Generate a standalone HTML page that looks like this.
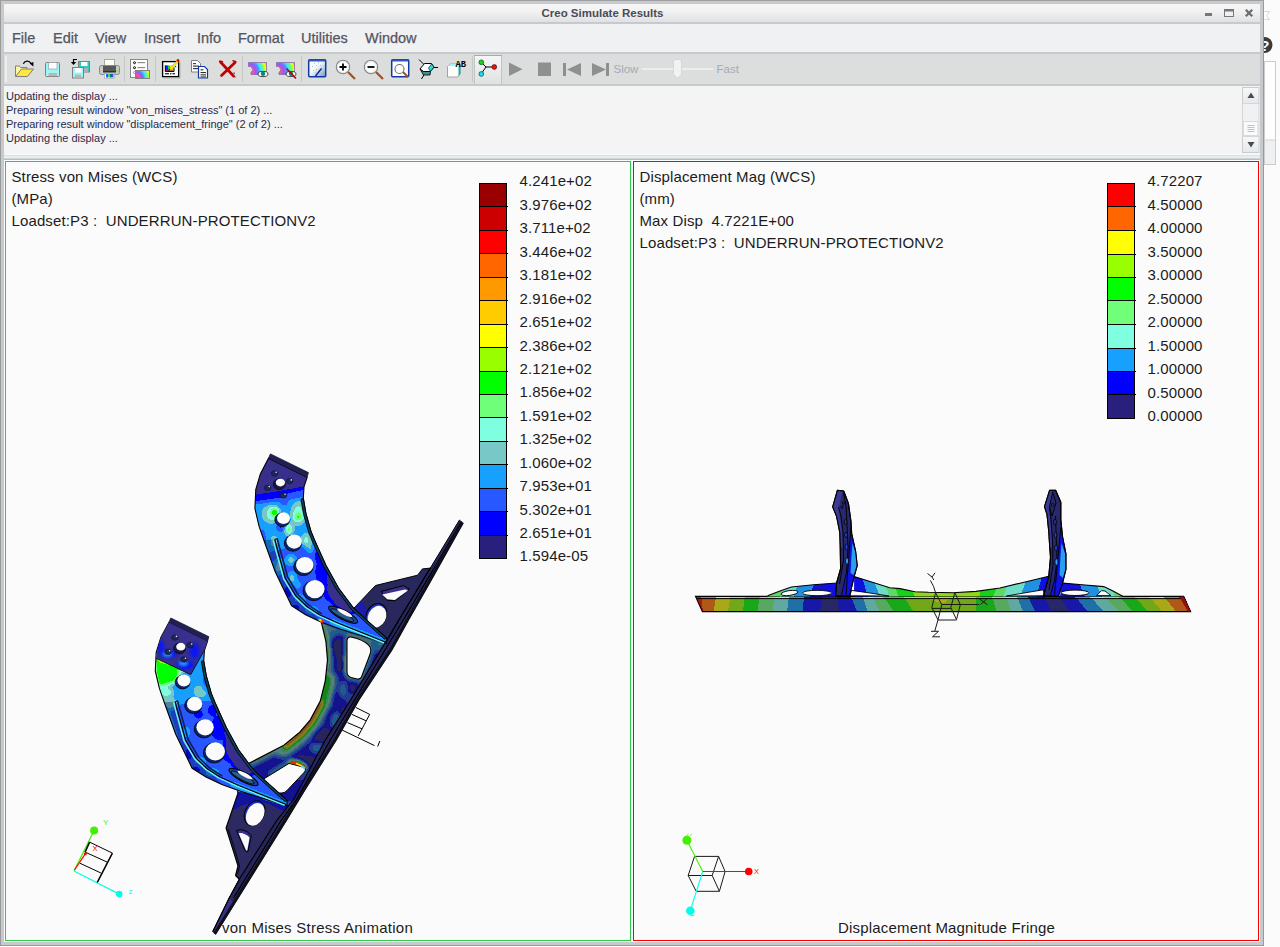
<!DOCTYPE html>
<html><head><meta charset="utf-8"><title>Creo Simulate Results</title>
<style>
*{box-sizing:border-box;margin:0;padding:0}
html,body{width:1280px;height:947px;overflow:hidden;background:#fbfbfb;font-family:"Liberation Sans",sans-serif}
.abs{position:absolute}
#win{position:absolute;left:0;top:0;width:1264px;height:946px;background:#c6cacd;border:1px solid #9a9a9a;border-top-color:#a0a0a0}
#title{position:absolute;left:4px;top:4px;width:1256px;height:18px;background:linear-gradient(#f6f6f6,#f2f2f2 40%,#dfe1e2);}
#title .t{position:absolute;left:0;width:1197px;top:3px;text-align:center;font-size:11.5px;font-weight:bold;color:#494b56;letter-spacing:0}
#menu{position:absolute;left:4px;top:24px;width:1256px;height:28px;background:#eff1f3}
#menu span{position:absolute;top:6px;font-size:14.5px;color:#55555f;white-space:nowrap;-webkit-text-stroke:0.25px #55555f}
#tb{position:absolute;left:4px;top:54px;width:1256px;height:30px;background:#dcdedd}
#msg{position:absolute;left:4px;top:86px;width:1256px;height:68px;background:#f4f4f4}
#msg div.l{position:absolute;left:2px;font-size:11px;color:#2a2a4a;white-space:nowrap}
#sep{position:absolute;left:4px;top:154px;width:1256px;height:6px;background:linear-gradient(#f4fbfd 0,#f4fbfd 1px,#dedede 1px,#dedede 2px,#ececec 2px,#ececec 4px,#d0d3d5 4.5px,#b6babc 5.6px,#b6babc 6px)}
#pl{position:absolute;left:5px;top:161px;width:626px;height:780px;background:#fbfbfb;border:1px solid #30c84a}
#pr{position:absolute;left:633px;top:161px;width:626px;height:780px;background:#fbfbfb;border:1px solid #ff0000}
#gapc{position:absolute;left:4px;top:160px;width:1256px;height:782px;background:#f8fefe}
#botw{position:absolute;left:4px;top:941px;width:1256px;height:1px;background:#f4fbfd}
.vt{position:absolute;font-size:15px;color:#111;white-space:nowrap;letter-spacing:0.35px}
.pan text{font-family:"Liberation Sans",sans-serif;white-space:pre}
.pan .vt2 text,.pan .lg text{font-size:15px;fill:#1c1c1c;letter-spacing:0.12px}
</style></head><body>
<div id="win"></div>
<div id="title"><div class="t">Creo Simulate Results</div></div>
<div id="menu">
<span style="left:8px">File</span><span style="left:49px">Edit</span><span style="left:91px">View</span><span style="left:140px">Insert</span><span style="left:193px">Info</span><span style="left:234px">Format</span><span style="left:297px">Utilities</span><span style="left:361px">Window</span>
</div>
<div id="tb"></div>
<svg id="tbs" class="abs" style="left:4px;top:54px" width="1256" height="30" viewBox="4 54 1256 30">
<defs>
<linearGradient id="rb" x1="0" y1="1" x2="1" y2="0"><stop offset="0" stop-color="#c040ff"/><stop offset=".18" stop-color="#ff50a0"/><stop offset=".32" stop-color="#8080ff"/><stop offset=".46" stop-color="#40e0ff"/><stop offset=".6" stop-color="#60ff80"/><stop offset=".75" stop-color="#ffff00"/><stop offset=".9" stop-color="#ff9000"/><stop offset="1" stop-color="#ff3000"/></linearGradient>
<radialGradient id="rr" gradientUnits="userSpaceOnUse" cx="249" cy="71" r="21"><stop offset="0" stop-color="#ff3070"/><stop offset=".2" stop-color="#ff50a0"/><stop offset=".32" stop-color="#a050ff"/><stop offset=".45" stop-color="#5090ff"/><stop offset=".56" stop-color="#40e8ff"/><stop offset=".68" stop-color="#60ff80"/><stop offset=".8" stop-color="#ffff00"/><stop offset=".92" stop-color="#ff9000"/><stop offset="1" stop-color="#ff3000"/></radialGradient><radialGradient id="rr2" gradientUnits="userSpaceOnUse" cx="136" cy="78" r="17"><stop offset="0" stop-color="#ff3070"/><stop offset=".2" stop-color="#ff50a0"/><stop offset=".32" stop-color="#a050ff"/><stop offset=".45" stop-color="#5090ff"/><stop offset=".56" stop-color="#40e8ff"/><stop offset=".68" stop-color="#60ff80"/><stop offset=".8" stop-color="#ffff00"/><stop offset=".92" stop-color="#ff9000"/><stop offset="1" stop-color="#ff3000"/></radialGradient><linearGradient id="pb" x1="0" y1="0" x2="0" y2="1"><stop offset="0" stop-color="#f6f6f6"/><stop offset="1" stop-color="#dfe1e1"/></linearGradient>
<linearGradient id="bl" x1="0" y1="0" x2="1" y2="1"><stop offset="0" stop-color="#ffffff"/><stop offset=".45" stop-color="#f4f8fc"/><stop offset="1" stop-color="#7098c0"/></linearGradient>
</defs>
<!-- handle -->
<rect x="5" y="56" width="2" height="26" fill="#eeeeee"/>
<!-- separators -->
<g fill="#c6c8c8"><rect x="124" y="56" width="1" height="26"/><rect x="155" y="56" width="1" height="26"/><rect x="242" y="56" width="1" height="26"/><rect x="301" y="56" width="1" height="26"/><rect x="472" y="56" width="1" height="26"/></g>
<!-- open folder -->
<path d="M15.500 76.500v-10.500h4l1 1.500h6.500v3h-5z" fill="#fff8a0" stroke="#808080" stroke-width="1"/>
<path d="M15.500 76.500h12l6-7.500h-12z" fill="#ffe838" stroke="#808080" stroke-width="1"/>
<path d="M23.300 63.800c1.800-3.400 5.800-3.600 7.800-0.300" fill="none" stroke="#000" stroke-width="1.300"/>
<path d="M29.600 63.600l3.800-1.600v4.600z" fill="#000"/>
<!-- save -->
<rect x="45.500" y="62.500" width="14" height="14" rx="1" fill="#9cf6f8" stroke="#808080"/>
<rect x="48.500" y="62.500" width="8.500" height="6.500" fill="#fff" stroke="#909090" stroke-width=".6"/>
<rect x="48.500" y="73" width="8.500" height="3.200" fill="#b8b8b8"/>
<!-- save copy -->
<rect x="78.500" y="61.500" width="11" height="10.500" fill="#38c8c8" stroke="#808080"/>
<rect x="81" y="62" width="6.500" height="4" fill="#fff"/><rect x="84" y="68" width="4" height="4" fill="#b0b0b0"/>
<rect x="72.500" y="67.500" width="11" height="10.500" fill="#9cf6f8" stroke="#808080"/>
<rect x="75" y="68" width="6.500" height="4.500" fill="#fff"/><rect x="75" y="74.500" width="6" height="3" fill="#b8b8b8"/>
<path d="M77 59.500h-3.500v3.500" fill="none" stroke="#000" stroke-width="1.200"/><path d="M70.800 62h5.400l-2.700 3z" fill="#000"/>
<!-- printer -->
<rect x="104.500" y="59.500" width="10" height="7" fill="#fffff4" stroke="#a8a8a0"/>
<rect x="99.500" y="65.500" width="20" height="9" rx="2" fill="#c8ccc4" stroke="#888"/>
<rect x="103" y="66" width="13" height="6" fill="#585858"/>
<rect x="103" y="71" width="13" height="1.500" fill="#303030"/>
<rect x="104.500" y="73.500" width="10" height="5" fill="#fff" stroke="#a0a0a0" stroke-width=".6"/>
<rect x="106" y="74" width="2" height="3.500" fill="#2060ff"/><rect x="108" y="74" width="2" height="3.500" fill="#40d890"/><rect x="110" y="74" width="2" height="3.500" fill="#008060"/><rect x="112" y="74" width="1.500" height="3.500" fill="#2060ff"/>
<rect x="116.500" y="70" width="2" height="2" fill="#70f060"/>
<!-- list icon -->
<rect x="130.500" y="59.500" width="17" height="18" fill="#fff" stroke="#888"/>
<g fill="none" stroke="#000" stroke-width="1"><circle cx="134.500" cy="62.700" r="1"/><circle cx="134.500" cy="67.700" r="1"/></g><circle cx="134.500" cy="72.500" r="1" fill="none" stroke="#999"/>
<rect x="137.500" y="62" width="7.500" height="1.200" fill="#909080"/><rect x="137.500" y="67" width="7.500" height="1.200" fill="#909080"/>
<rect x="135.500" y="70.500" width="14" height="8" fill="url(#rr2)" stroke="#808080"/>
<!-- edit icon -->
<rect x="162.600" y="61.600" width="16" height="15" fill="#fff" stroke="#000" stroke-width="1.300"/>
<rect x="179.300" y="63" width="1" height="15" fill="#999"/><rect x="164" y="77.300" width="16" height="1" fill="#999"/>
<rect x="165.500" y="65.500" width="8" height="5.500" fill="url(#rb)"/><rect x="165.500" y="65.500" width="2.500" height="5.500" fill="#1020ff"/><rect x="168" y="65.500" width="2" height="5.500" fill="#10d040"/><rect x="165.500" y="70" width="8" height="1" fill="#e02020" opacity=".7"/>
<path d="M165.300 65.300v6.200h8.700v-4" fill="none" stroke="#000" stroke-width="1"/>
<rect x="165" y="73.200" width="4" height="1.100" fill="#000"/><rect x="170" y="73.200" width="1.500" height="1.100" fill="#000"/><rect x="172.500" y="73.200" width="2.500" height="1.100" fill="#000"/>
<path d="M169 69.500l8-9 1.500 1.500-8 8.500z" fill="#ffee00" stroke="#a09000" stroke-width=".4"/><circle cx="178" cy="60.200" r="1.300" fill="#f00000"/><path d="M168.300 70.800l1-2 1.200 1.200z" fill="#000"/>
<rect x="175" y="66" width="1.200" height="1.200" fill="#1020ff"/>
<!-- copy -->
<path d="M191.500 60.500h6l3 3v8.500h-9z" fill="#fff" stroke="#808080"/>
<g fill="#404040"><rect x="193" y="63" width="3" height="1.200"/><rect x="193" y="65.500" width="6" height="1.200"/><rect x="193" y="68" width="5" height="1.200"/></g>
<path d="M198.500 66.500h6l3 3v8.500h-9z" fill="#fff" stroke="#1038a0" stroke-width="1.200"/>
<g fill="#303030"><rect x="200.500" y="69.300" width="3" height="1.100"/><rect x="200.500" y="72" width="5.500" height="1.100"/><rect x="200.500" y="74.300" width="5.500" height="1.100"/><rect x="200.500" y="76.400" width="5.500" height="1"/></g>
<!-- red X -->
<path d="M220.500 62 L233.500 76 M235 62.500 L221.500 75.500" stroke="#c00000" stroke-width="2.700" stroke-linecap="round" fill="none"/>
<path d="M219.500 61.200l3 .5M233 60.800l2.800 1" stroke="#c00000" stroke-width="1.500" stroke-linecap="round"/>
<rect x="233.500" y="72.500" width="1.300" height="1.300" fill="#c00000"/><rect x="234.200" y="76.300" width="1.300" height="1.300" fill="#c00000"/>
<!-- show -->
<g id="rbshape"><path d="M248.500 62.500h18v9.500h-6v2.500h-9.500v-2l2-2.500-2-3.500h-2.500z" fill="url(#rr)" stroke="#8868a8" stroke-width=".8"/>
<ellipse cx="263" cy="74" rx="5" ry="2.600" fill="#fff" stroke="#202020" stroke-width=".8"/><circle cx="263" cy="73.800" r="2.200" fill="#008888"/></g>
<use href="#rbshape" x="28" y="0"/>
<path d="M286.500 68.500l9.500 10" stroke="#b00000" stroke-width="1.600"/>
<!-- repaint -->
<rect x="308.700" y="59.700" width="17" height="17" rx="1" fill="url(#bl)" stroke="#1038a8" stroke-width="1.500"/>
<rect x="309" y="59.500" width="16.500" height="2" fill="#3058b8"/>
<path d="M315.500 76l6-7.500" stroke="#102080" stroke-width="1.300" fill="none"/>
<g fill="#a8c4e0"><rect x="312" y="66" width="1" height="1"/><rect x="314" y="63" width="1" height="1"/><rect x="316" y="65" width="1" height="1"/><rect x="318" y="62" width="1" height="1"/><rect x="313" y="70" width="1" height="1"/><rect x="316" y="69" width="1" height="1"/><rect x="320" y="65" width="1" height="1"/><rect x="315" y="72" width="1" height="1"/></g>
<!-- zoom in -->
<g id="mag"><path d="M348 72l7 7" stroke="#a05020" stroke-width="2.200"/><circle cx="343" cy="67" r="6.700" fill="#fff" stroke="#888" stroke-width="1.100"/><circle cx="343" cy="67" r="5.600" fill="none" stroke="#ddd" stroke-width=".8"/></g>
<path d="M339.500 67h7M343 63.500v7" stroke="#000" stroke-width="1.800"/>
<!-- zoom out -->
<use href="#mag" x="28" y="0"/>
<path d="M367.500 67h7" stroke="#000" stroke-width="1.800"/>
<!-- refit -->
<rect x="391.700" y="59.700" width="17" height="17" rx="1" fill="#fff" stroke="#1038a8" stroke-width="1.500"/><rect x="392" y="59.500" width="16.500" height="2" fill="#3058b8"/>
<path d="M403 72l5 5" stroke="#a05020" stroke-width="2"/><circle cx="399.500" cy="69" r="4.500" fill="#fff" stroke="#707070" stroke-width="1.100"/>
<!-- orient -->
<path d="M419 59.500l5 5M438 67.500h-4M421.500 79l3-5" stroke="#000" stroke-width="1" fill="none"/>
<path d="M420 69l4.500-5.500h7l2.500 3.500-3.500 4.500h-7z" fill="#fff" stroke="#000" stroke-width="1"/>
<path d="M430.500 71.500l3.500-4.500-2.500-3-3 4z" fill="#20e0e0" stroke="#000" stroke-width=".6"/>
<path d="M420 69l3 2.500h7.500l-0.500 3.500h-6.500z" fill="#409090" stroke="#000" stroke-width=".8"/>
<!-- AB -->
<path d="M447.500 77v-10.500l3-3h9.500v10.500l-2.500 3z" fill="#fff" stroke="#909090" stroke-width=".8"/>
<path d="M448 66l2.500-2.500h9l-1.500 2.500z" fill="#a0f4f8"/><path d="M458.500 66.500l2-2.500v9.500l-2 3z" fill="#20a8a8"/>
<text x="455.500" y="67.300" font-family="Liberation Mono,monospace" font-weight="bold" font-size="9.500" fill="#000" textLength="10.500" lengthAdjust="spacingAndGlyphs">AB</text>
<!-- pressed spin button -->
<rect x="474.500" y="55.500" width="27" height="29" fill="url(#pb)" stroke="#c2c4c4"/><rect x="474" y="55" width="28" height="1" fill="#a8aaaa"/>
<path d="M481 62l5 5h8M486 67l-5 7" stroke="#000" stroke-width="1" fill="none"/>
<circle cx="481.300" cy="62.300" r="2.400" fill="#10d818" stroke="#083008" stroke-width=".6"/><circle cx="494.300" cy="67" r="2.400" fill="#f01010" stroke="#300808" stroke-width=".6"/><circle cx="481.300" cy="74" r="2.400" fill="#10e0f0" stroke="#083038" stroke-width=".6"/>
<!-- play controls -->
<g fill="#8e908f"><path d="M509 62.500l13.500 6.700-13.500 6.800z"/><rect x="538" y="62.500" width="13" height="13.500"/><rect x="563" y="63" width="3" height="13"/><path d="M581 63v13l-14-6.500z"/><path d="M592 63v13l14-6.500z"/><rect x="606" y="63" width="3" height="13"/></g>
<text x="613.500" y="73" font-family="Liberation Sans,sans-serif" font-size="11.500" fill="#a4aab6">Slow</text>
<rect x="641.500" y="68" width="72" height="2" rx="1" fill="#eceeee"/>
<path d="M673.500 62c0-1.500 1-2.500 2.500-2.500h3c1.500 0 2.500 1 2.500 2.500v12.500l-4 3.800-4-3.800z" fill="#f2f2f2" stroke="#d2d4d4" stroke-width=".9"/>
<text x="716.500" y="73" font-family="Liberation Sans,sans-serif" font-size="11.500" fill="#a4aab6">Fast</text>
</svg>

<div id="msg">
<div class="l" style="top:4px">Updating the display ...</div>
<div class="l" style="top:18px">Preparing result window "von_mises_stress" (1 of 2) ...</div>
<div class="l" style="top:32px">Preparing result window "displacement_fringe" (2 of 2) ...</div>
<div class="l" style="top:46px">Updating the display ...</div>
</div>
<div id="sep"></div>
<div id="gapc"></div>

<div id="pl"></div>
<div id="pr"></div>




<!--EX-->
<svg class="abs" style="left:1196px;top:0" width="84" height="170" viewBox="1196 0 84 170">
<rect x="1205" y="13" width="7" height="3" fill="#76777d"/>
<rect x="1224.500" y="10.500" width="9" height="6" fill="#f0f0f0" stroke="#76777d" stroke-width="1"/><rect x="1224" y="9" width="10" height="2.500" fill="#76777d"/>
<path d="M1245.800 9.800 L1252.200 16.200 M1252.200 9.800 L1245.800 16.200" stroke="#6c6d73" stroke-width="2.300"/>
<!-- outside bits -->
<path d="M1264.500 11.500 H1269.500 L1266.500 15.500 L1269.500 19.500 H1264.500" fill="#fff" stroke="#d4d6d8" stroke-width="1"/>
<clipPath id="outc"><rect x="1264" y="0" width="16" height="170"/></clipPath>
<g clip-path="url(#outc)"><circle cx="1264.500" cy="45" r="8" fill="#3a3b3e"/>
<text x="1260.300" y="50.500" font-family="Liberation Sans,sans-serif" font-weight="bold" font-size="15" fill="#fff">?</text></g>
<rect x="1264.500" y="61.500" width="11" height="103" fill="#fdfdfd" stroke="#c9cdd0" stroke-width="1"/>
<rect x="1265" y="140" width="10" height="24" fill="#eef0f2"/><rect x="1264" y="139.500" width="11" height="1" fill="#d0d3d6"/>
<!-- window frame redraw over outside bits -->
<rect x="1260" y="0" width="3" height="170" fill="#c6cacd"/><rect x="1263" y="0" width="1" height="170" fill="#9a9a9a"/>
<rect x="1196" y="0" width="68" height="1" fill="#a0a0a0"/>
<!-- scrollbar -->
<defs><linearGradient id="sbg" x1="0" y1="0" x2="0" y2="1"><stop offset="0" stop-color="#f8f8f8"/><stop offset="1" stop-color="#e6e7e9"/></linearGradient></defs>
<rect x="1243" y="87" width="16" height="66" fill="#f0f1f2"/>
<rect x="1242.500" y="87.500" width="16.500" height="16" fill="url(#sbg)" stroke="#c9cdd0"/>
<rect x="1242.500" y="136.500" width="16.500" height="16" fill="url(#sbg)" stroke="#c9cdd0"/>
<rect x="1242.500" y="103.500" width="16.500" height="33" fill="none" stroke="#d4d7da"/>
<rect x="1243.500" y="121.500" width="14.500" height="14" fill="#fafafa" stroke="#d8dadc"/>
<path d="M1247.500 125.500h7M1247.500 127.500h7M1247.500 129.500h7M1247.500 131.500h7" stroke="#c0c2c6" stroke-width="1"/>
<path d="M1247.500 98 L1251 92.500 L1254.500 98 Z" fill="#484b58"/>
<path d="M1247.500 142 L1251 147.500 L1254.500 142 Z" fill="#484b58"/>
</svg><!--/EX-->




























<!--PL--><svg class="abs pan" style="left:6px;top:162px" width="624" height="778" viewBox="6 162 624 778">
<g class="vt2"><text x="11.500" y="182">Stress von Mises (WCS)</text><text x="11.500" y="204">(MPa)</text><text x="11.500" y="226">Loadset:P3 :&#160; UNDERRUN-PROTECTIONV2</text><text x="222" y="932.500" style="letter-spacing:0.26px">von Mises Stress Animation</text></g>
<g class="lg" shape-rendering="crispEdges"><rect x="479" y="183" width="28" height="23" fill="#990000"/>
<rect x="479" y="206" width="28" height="24" fill="#cc0000"/>
<rect x="479" y="230" width="28" height="23" fill="#ff0000"/>
<rect x="479" y="253" width="28" height="24" fill="#ff6600"/>
<rect x="479" y="277" width="28" height="23" fill="#ff9900"/>
<rect x="479" y="300" width="28" height="24" fill="#ffcc00"/>
<rect x="479" y="324" width="28" height="23" fill="#ffff00"/>
<rect x="479" y="347" width="28" height="24" fill="#99ff00"/>
<rect x="479" y="371" width="28" height="23" fill="#00ff00"/>
<rect x="479" y="394" width="28" height="23" fill="#70ff78"/>
<rect x="479" y="417" width="28" height="24" fill="#80ffe0"/>
<rect x="479" y="441" width="28" height="23" fill="#78c8c8"/>
<rect x="479" y="464" width="28" height="24" fill="#18a0ff"/>
<rect x="479" y="488" width="28" height="23" fill="#2858ff"/>
<rect x="479" y="511" width="28" height="24" fill="#0000ff"/>
<rect x="479" y="535" width="28" height="23" fill="#28207c"/>
<rect x="479.5" y="183.5" width="27" height="375" fill="none" stroke="#000" stroke-width="1"/>
<rect x="479" y="206" width="29" height="1" fill="#000"/>
<rect x="479" y="230" width="29" height="1" fill="#000"/>
<rect x="479" y="253" width="29" height="1" fill="#000"/>
<rect x="479" y="277" width="29" height="1" fill="#000"/>
<rect x="479" y="300" width="29" height="1" fill="#000"/>
<rect x="479" y="324" width="29" height="1" fill="#000"/>
<rect x="479" y="347" width="29" height="1" fill="#000"/>
<rect x="479" y="371" width="29" height="1" fill="#000"/>
<rect x="479" y="394" width="29" height="1" fill="#000"/>
<rect x="479" y="417" width="29" height="1" fill="#000"/>
<rect x="479" y="441" width="29" height="1" fill="#000"/>
<rect x="479" y="464" width="29" height="1" fill="#000"/>
<rect x="479" y="488" width="29" height="1" fill="#000"/>
<rect x="479" y="511" width="29" height="1" fill="#000"/>
<rect x="479" y="535" width="29" height="1" fill="#000"/>
<text x="519.5" y="186.4">4.241e+02</text>
<text x="519.5" y="209.8">3.976e+02</text>
<text x="519.5" y="233.3">3.711e+02</text>
<text x="519.5" y="256.7">3.446e+02</text>
<text x="519.5" y="280.2">3.181e+02</text>
<text x="519.5" y="303.6">2.916e+02</text>
<text x="519.5" y="327.0">2.651e+02</text>
<text x="519.5" y="350.5">2.386e+02</text>
<text x="519.5" y="373.9">2.121e+02</text>
<text x="519.5" y="397.4">1.856e+02</text>
<text x="519.5" y="420.8">1.591e+02</text>
<text x="519.5" y="444.2">1.325e+02</text>
<text x="519.5" y="467.7">1.060e+02</text>
<text x="519.5" y="491.1">7.953e+01</text>
<text x="519.5" y="514.6">5.302e+01</text>
<text x="519.5" y="538.0">2.651e+01</text>
<text x="519.5" y="561.4">1.594e-05</text></g>
<g shape-rendering="auto"><defs>
<defs><clipPath id="plateclip"><path d="M268.5 458.3 L307.1 477.3 L303.5 487.0 L290.3 510.5 L255.4 494.0 L257.5 484.0 L260.3 474.1 Z"/></clipPath><filter id="bl2" x="-20%" y="-20%" width="140%" height="140%"><feGaussianBlur stdDeviation="1.6"/></filter></defs>
<filter id="cmA" x="0" y="0" width="100%" height="100%" filterUnits="objectBoundingBox" color-interpolation-filters="sRGB"><feGaussianBlur stdDeviation="2.2"/><feComponentTransfer><feFuncR type="discrete" tableValues="0.220 0.000 0.157 0.094 0.471 0.502 0.439 0.000 0.600 1.000 1.000 1.000 1.000 1.000 0.800 0.600"/><feFuncG type="discrete" tableValues="0.188 0.000 0.345 0.627 0.784 1.000 1.000 1.000 1.000 1.000 0.800 0.600 0.400 0.000 0.000 0.000"/><feFuncB type="discrete" tableValues="0.549 1.000 1.000 1.000 0.784 0.878 0.471 0.000 0.000 0.000 0.000 0.000 0.000 0.000 0.000 0.000"/><feFuncA type="discrete" tableValues="1 1"/></feComponentTransfer></filter>
<filter id="cmD" x="0" y="0" width="100%" height="100%" filterUnits="objectBoundingBox" color-interpolation-filters="sRGB"><feGaussianBlur stdDeviation="2.2"/><feComponentTransfer><feFuncR type="discrete" tableValues="0.175 0.078 0.166 0.131 0.342 0.360 0.324 0.078 0.414 0.638 0.638 0.638 0.638 0.638 0.526 0.414"/><feFuncG type="discrete" tableValues="0.166 0.078 0.272 0.430 0.518 0.638 0.638 0.638 0.638 0.638 0.526 0.414 0.302 0.078 0.078 0.078"/><feFuncB type="discrete" tableValues="0.377 0.638 0.638 0.638 0.518 0.570 0.342 0.078 0.078 0.078 0.078 0.078 0.078 0.078 0.078 0.078"/><feFuncA type="discrete" tableValues="1 1"/></feComponentTransfer></filter>
<clipPath id="armclip"><path d="M268.5 458.3 L260.3 474.1 L255.8 489.3 L254.9 508.3 L259.0 526.1 L263.8 540.0 L275.2 571.7 L291.7 605.9 L305.6 614.7 L321.4 622.3 L340.0 629.0 L386.5 643.5 L386.7 638.2 L353.7 608.4 L338.5 588.1 L325.9 565.3 L314.5 540.0 L310.9 531.1 L305.9 513.4 L303.3 498.2 L304.0 486.8 L307.1 477.3 Z"/></clipPath>
<clipPath id="ringclip"><path d="M321.4 622.3 L325.9 641.3 L327.5 660.0 L325.3 680.8 L320.3 701.1 L310.1 720.1 L300.0 732.0 L283.3 745.6 L249.1 763.3 L261.8 781.0 L274.5 793.7 L286.0 807.0 L295.0 800.0 L325.3 740.0 L350.5 700.0 L398.8 620.0 L388.0 640.0 L386.5 643.5 L340.0 629.0 Z"/></clipPath>
<clipPath id="gus2clip"><path d="M237.4 791.2 L238.0 793.2 L226.1 828.0 L234.1 853.4 L238.0 866.0 L235.6 875.5 L239.6 879.5 L277.0 820.0 L292.5 801.3 L286.8 801.3 Z"/></clipPath>
</defs>
<path d="M459.6 519.8 L430.3 568.1 L398.8 620.0 L350.5 700.0 L325.3 740.0 L293.5 799.5 L277.0 820.0 L239.6 878.7 L229.3 897.7 L212.7 931.8 L215.8 934.5 L287.1 820.0 L305.3 790.0 L336.7 740.0 L359.3 700.0 L392.3 650.0 L408.9 620.0 L430.0 583.0 L463.6 523.0 Z" fill="#26265c"/>
<path d="M229.3 897.7 L212.7 931.8 L215.8 934.5 L233.5 903.0 Z" fill="#38308c"/>
<path d="M461.4 521.2 L433.3 569.4 L403.3 620.0 L354.5 700.0 L330.4 740.0 L296.4 799.5 L281.5 820.0 L233.7 897.7" fill="none" stroke="#000" stroke-width="1"/>
<path d="M459.6 519.8 L430.3 568.1 L398.8 620.0 L350.5 700.0 L325.3 740.0 L293.5 799.5 L277.0 820.0 L239.6 878.7 L229.3 897.7 L212.7 931.8" fill="none" stroke="#000" stroke-width="1"/>
<path d="M462.4 522.4 L428.8 582.4 L407.7 619.4 L391.1 649.4 L358.1 699.4 L335.5 739.4 L304.1 789.4 L285.9 819.4 L214.6 933.9" fill="none" stroke="#101018" stroke-width="3"/>
<path d="M353.7 608.4 L375.5 585.5 L417.6 575.2 L422.4 568.9 L430.3 568.1 L398.8 620.0 L388.0 640.0 Z" fill="#28285c" stroke="#000" stroke-width="1" stroke-linejoin="round"/>
<path d="M353.7 608.4 L362.0 600.0 L368.0 612.0 L372.0 628.0 L365.0 620.0 Z" fill="#1c1ca8"/>
<path d="M381.2 591.4 L403.4 585.6 L409.4 589.0 L395.4 600.8 L387.0 600.2 Z" fill="#38308c" stroke="#000" stroke-width="1" stroke-linejoin="round"/>
<path d="M382.2 594.6 L405.0 589.4 L408.0 590.4 L394.8 600.0 L387.2 599.2 Z" fill="#fbfbfb"/>
<ellipse cx="376.3" cy="615.6" rx="10" ry="12.4" transform="rotate(27 376.3 615.6)" fill="#2030c0" stroke="#000" stroke-width="1"/>
<ellipse cx="377" cy="616.8" rx="8.9" ry="11.4" transform="rotate(27 377 616.8)" fill="#fbfbfb"/>
<g clip-path="url(#ringclip)"><g filter="url(#cmD)">
<rect x="230" y="600" width="180" height="220" fill="#181818"/>
<ellipse cx="338" cy="648" rx="6" ry="10" fill="#080808"/>
<ellipse cx="334" cy="690" rx="6" ry="14" fill="#080808"/>
<ellipse cx="340" cy="665" rx="4" ry="8" fill="#080808"/>
<ellipse cx="322" cy="735" rx="10" ry="8" fill="#080808"/>
<ellipse cx="300" cy="762" rx="14" ry="7" fill="#080808"/>
<ellipse cx="352" cy="690" rx="6" ry="6" fill="#080808"/>
<ellipse cx="375" cy="640" rx="6" ry="5" fill="#080808"/>
<ellipse cx="330" cy="715" rx="5" ry="8" fill="#080808"/>
<ellipse cx="332" cy="632" rx="5" ry="6" fill="#383838"/>
<ellipse cx="343" cy="690" rx="5" ry="8" fill="#383838"/>
<ellipse cx="352" cy="700" rx="6" ry="8" fill="#282828"/>
<ellipse cx="336" cy="720" rx="6" ry="8" fill="#383838"/>
<ellipse cx="318" cy="748" rx="8" ry="5" fill="#383838"/>
<ellipse cx="300" cy="775" rx="10" ry="5" fill="#282828"/>
<ellipse cx="378" cy="648" rx="5" ry="4" fill="#383838"/>
<ellipse cx="362" cy="690" rx="5" ry="5" fill="#383838"/>
<ellipse cx="330" cy="668" rx="3" ry="8" fill="#383838"/>
<ellipse cx="345" cy="712" rx="4" ry="6" fill="#080808"/>
<ellipse cx="310" cy="760" rx="6" ry="4" fill="#080808"/>
<ellipse cx="326" cy="752" rx="5" ry="5" fill="#282828"/>
<path d="M321.4 622.3 L325.9 641.3 L327.5 660.0 L325.3 680.8" fill="none" stroke="#585858" stroke-width="9"/>
<path d="M321.4 622.3 L325.9 641.3 L327.5 660.0" fill="none" stroke="#888888" stroke-width="3"/>
<path d="M325.3 680.8 L320.3 701.1 L310.1 720.1 L300.0 732.0 L283.3 745.6" fill="none" stroke="#484848" stroke-width="24" stroke-linecap="round"/>
<path d="M325.3 680.8 L320.3 701.1 L310.1 720.1 L300.0 732.0 L283.3 745.6" fill="none" stroke="#787878" stroke-width="15" stroke-linecap="round"/>
<path d="M320.3 701.1 L310.1 720.1 L300.0 732.0 L283.3 745.6" fill="none" stroke="#c8c8c8" stroke-width="7"/>
<path d="M283.3 745.6 L249.1 763.3" fill="none" stroke="#585858" stroke-width="7"/>
<path d="M346.9 641.0 L346.9 671.9 L350.7 677.0 L360.8 678.9 L370.5 651.0 L368.0 644.5 L356.0 638.5 L349.0 636.8 Z" fill="none" stroke="#585858" stroke-width="5"/>
<path d="M346.9 655.0 L346.9 671.9 L350.7 677.0" fill="none" stroke="#888888" stroke-width="3"/>
<path d="M322.0 623.0 L340.0 631.0 L386.0 645.0" fill="none" stroke="#484848" stroke-width="5"/>
<path d="M288.0 762.0 L298.0 763.0 L306.0 768.0" fill="none" stroke="#d8d8d8" stroke-width="4"/>
<path d="M270.0 775.0 L290.0 763.0" fill="none" stroke="#484848" stroke-width="5"/>
</g></g>
<path d="M321.4 622.3 L325.9 641.3 L327.5 660.0 L325.3 680.8 L320.3 701.1 L310.1 720.1 L300.0 732.0 L283.3 745.6 L249.1 763.3 L261.8 781.0 L274.5 793.7 L286.0 807.0 L295.0 800.0 L325.3 740.0 L350.5 700.0 L398.8 620.0 L388.0 640.0 L386.5 643.5 L340.0 629.0 Z" fill="#141446" fill-opacity=".2"/>
<path d="M321.4 622.3 L325.9 641.3 L327.5 660.0 L325.3 680.8 L320.3 701.1 L310.1 720.1 L300.0 732.0 L283.3 745.6 L249.1 763.3" fill="none" stroke="#000" stroke-width="1.2"/>
<path d="M347 641 Q347 636.5 351 637 L357 638.5 Q367 642 370 647 Q371.5 650 370.5 653 L361.5 677 Q360.5 679.5 357 679 L351 677.5 Q347 676 347 672 Z" fill="#fbfbfb" stroke="#000" stroke-width="1.1"/>
<path d="M289 763.4 L303 767 Q307 768.5 304.5 772 L286.500 791 Q284.500 793 281.500 793 L276 793 Q273.500 792.500 271 790 L262 780 Z" fill="#fbfbfb" stroke="#000" stroke-width="1"/>
<path d="M290.500 762.800 Q299 763 305.500 768.500" fill="none" stroke="#ff2000" stroke-width="2"/><path d="M296 763.500 Q301 765 304.500 768" fill="none" stroke="#ffe800" stroke-width="1.600"/><path d="M301 765.800 L304.800 768.600" fill="none" stroke="#50d8ff" stroke-width="1.500"/>
<g clip-path="url(#armclip)"><g filter="url(#cmA)">
<rect x="240" y="440" width="160" height="215" fill="#383838"/>
<path d="M240 440 H400 V484 L304 488.500 L280 493 L256 496.500 L240 497 Z" fill="#080808"/>
<path d="M250 498.500 L280 495 L306 490.500 L306 495 L280 500 L252 503.500 Z" fill="#181818"/>
<path d="M268 552 L300 545 L325 545 L345 590 L390 645 L330 630 L290 610 Z" fill="#282828"/>
<ellipse cx="271" cy="514" rx="9.5" ry="9.5" fill="#484848"/>
<ellipse cx="272.3" cy="514" rx="5.7" ry="7" fill="#585858"/>
<ellipse cx="274.8" cy="512" rx="3.2" ry="3.8" fill="#888888"/>
<ellipse cx="276.1" cy="513.4" rx="1.3" ry="1.3" fill="#a8a8a8"/>
<ellipse cx="298.3" cy="513.4" rx="7.6" ry="12.7" fill="#484848"/>
<ellipse cx="298.3" cy="513.4" rx="5" ry="7.6" fill="#585858"/>
<ellipse cx="298.3" cy="517.2" rx="4.6" ry="3.6" fill="#787878"/>
<ellipse cx="284.5" cy="503" rx="4" ry="3" fill="#282828"/>
<ellipse cx="281.2" cy="527.3" rx="4.4" ry="3.8" fill="#181818"/>
<ellipse cx="288.8" cy="529" rx="4" ry="5.5" fill="#686868"/>
<ellipse cx="305.9" cy="540" rx="5.5" ry="7" fill="#484848"/>
<ellipse cx="306.5" cy="540" rx="3" ry="4.5" fill="#585858"/>
<ellipse cx="274.2" cy="541" rx="3.8" ry="6.3" fill="#484848"/>
<ellipse cx="262" cy="540" rx="4" ry="12" fill="#282828"/>
<ellipse cx="300" cy="553" rx="6" ry="5" fill="#282828"/>
<ellipse cx="291" cy="560" rx="5" ry="5" fill="#484848"/>
<ellipse cx="279" cy="566" rx="4" ry="8" fill="#484848"/>
<ellipse cx="310" cy="548" rx="3" ry="5" fill="#484848"/>
<ellipse cx="322" cy="572" rx="7" ry="12" fill="#181818"/>
<ellipse cx="330" cy="592" rx="7" ry="10" fill="#181818"/>
<ellipse cx="318" cy="556" rx="4" ry="6" fill="#181818"/>
<ellipse cx="300" cy="600" rx="6" ry="6" fill="#383838"/>
<ellipse cx="312" cy="610" rx="8" ry="4" fill="#383838"/>
<ellipse cx="288" cy="592" rx="4" ry="7" fill="#181818"/>
<ellipse cx="296" cy="607" rx="5" ry="4" fill="#181818"/>
<ellipse cx="292" cy="578" rx="4" ry="6" fill="#484848"/>
<ellipse cx="298" cy="585" rx="3" ry="5" fill="#383838"/>
<path d="M326 568 L341 589 L358 611 L348 615 L334 605 L327 592 Z" fill="#080808" />
<path d="M352 612 L386 641 L362 632 L345 622 Z" fill="#282828"/>
<path d="M330 621 L386 643" stroke="#484848" stroke-width="3"/>
</g></g>
<path d="M263.8 540.0 L275.2 571.7 L291.7 605.9 L305.6 614.7 L321.4 622.3 L306.9 606.5 L296.0 596.0 L285.3 578.0 L276.5 546.0 L274.8 539.4 Z" fill="#0a1450" fill-opacity=".38"/>
<path d="M268.5 458.3 L260.3 474.1 L255.8 489.3 L254.9 508.3 L259.0 526.1 L263.8 540.0 L275.2 571.7 L291.7 605.9 L305.6 614.7 L321.4 622.3 L340.0 629.0 L386.5 643.5 L386.7 638.2 L353.7 608.4 L338.5 588.1 L325.9 565.3 L314.5 540.0 L310.9 531.1 L305.9 513.4 L303.3 498.2 L304.0 486.8 L307.1 477.3 Z" fill="none" stroke="#000" stroke-width="1.1" stroke-linejoin="round"/>
<path d="M303.3 498.2 L305.9 513.4 L310.9 531.1 L314.5 540.0 L325.9 565.3 L338.5 588.1 L353.7 608.4 L386.7 638.2 L384.4 639.2 L351.4 609.4 L336.2 589.1 L323.6 566.3 L312.2 541.0 L308.6 532.1 L303.6 514.4 L301.0 499.2 Z" fill="#10405c" stroke="#000" stroke-width=".9"/>
<path d="M273.2 540.0 L274.9 546.6 L283.7 578.6 L294.4 596.6 L305.3 607.1 L317.9 615.3 L336.9 623.9 L384.4 642.9" fill="none" stroke="#70f0f0" stroke-width="1.6"/>
<path d="M274.8 539.4 L276.5 546.0 L285.3 578.0 L296.0 596.0 L306.9 606.5 L319.5 614.7 L338.5 623.3 L386.0 642.3" fill="none" stroke="#000" stroke-width="1.1"/>
<path d="M277.2 538.6 L278.9 545.2 L287.7 577.2 L298.4 595.2 L309.3 605.7 L321.9 613.9" fill="none" stroke="#102050" stroke-width="1.6"/>
<path d="M274.8 539.4 L277.2 538.6" stroke="#000" stroke-width="1"/>
<path d="M270.4 453.9 L308.4 472.6 L307.1 477.3 L268.5 458.3 Z" fill="#202054" stroke="#101030" stroke-width=".8"/>
<ellipse cx="282.20000000000005" cy="519.8" rx="7.3999999999999995" ry="6.8" fill="#0c2468" stroke="#000" stroke-width=".8"/>
<ellipse cx="283.5" cy="518.2" rx="6.5" ry="5.8999999999999995" fill="#fbfbfb"/>
<ellipse cx="292.90000000000003" cy="543.1999999999999" rx="8.6" ry="8" fill="#0c2468" stroke="#000" stroke-width=".8"/>
<ellipse cx="294.2" cy="541.6" rx="7.7" ry="7.1" fill="#fbfbfb"/>
<ellipse cx="303.40000000000003" cy="566.5999999999999" rx="9.6" ry="9" fill="#0c2468" stroke="#000" stroke-width=".8"/>
<ellipse cx="304.7" cy="565.0" rx="8.7" ry="8.1" fill="#fbfbfb"/>
<ellipse cx="313.6" cy="590.6999999999999" rx="10.6" ry="10" fill="#0c2468" stroke="#000" stroke-width=".8"/>
<ellipse cx="314.9" cy="589.1" rx="9.7" ry="9.1" fill="#fbfbfb"/>
<g transform="rotate(28 343.1 614.7)"><ellipse cx="343.1" cy="614.7" rx="16.3" ry="4.6" fill="#1c4488" stroke="#000" stroke-width="1"/><ellipse cx="342.6" cy="615.5" rx="13" ry="2.6" fill="#2c5c8c" stroke="#000" stroke-width=".7"/><ellipse cx="343.6" cy="612.2" rx="8.4" ry="1.9" fill="#fbfbfb"/></g>
<ellipse cx="279.3" cy="484.2" rx="6" ry="5.5" fill="#181840" stroke="#000" stroke-width=".6"/>
<ellipse cx="280.4" cy="482.6" rx="4.6" ry="3.9" fill="#fbfbfb"/>
<ellipse cx="274.5" cy="473.5" rx="3.3" ry="2.7" fill="#1c2858" stroke="#101030" stroke-width=".6"/>
<circle cx="276.1" cy="472.3" r=".8" fill="#e8e8f0"/>
<ellipse cx="289.7" cy="481.1" rx="3.3" ry="2.7" fill="#1c2858" stroke="#101030" stroke-width=".6"/>
<circle cx="291.3" cy="479.90000000000003" r=".8" fill="#e8e8f0"/>
<ellipse cx="267.6" cy="487.8" rx="3.3" ry="2.7" fill="#1c2858" stroke="#101030" stroke-width=".6"/>
<circle cx="269.20000000000005" cy="486.6" r=".8" fill="#e8e8f0"/>
<ellipse cx="283.5" cy="495.4" rx="3.3" ry="2.7" fill="#1c2858" stroke="#101030" stroke-width=".6"/>
<circle cx="285.1" cy="494.2" r=".8" fill="#e8e8f0"/>
<circle cx="321.8" cy="621.2" r="1.7" fill="#ff3000"/><circle cx="320.300" cy="620.200" r="1.200" fill="#ffe000"/><circle cx="319" cy="619.500" r="1" fill="#40e040"/>
<g clip-path="url(#gus2clip)"><g filter="url(#cmD)">
<rect x="215" y="780" width="90" height="110" fill="#080808"/>
<path d="M230 785 L295 800 L285 812 L262 800 L240 806 L232 812 Z" fill="#181818"/>
<path d="M262 797 L292 803" stroke="#484848" stroke-width="3"/>
</g></g>
<path d="M237.4 791.2 L238.0 793.2 L226.1 828.0 L234.1 853.4 L238.0 866.0 L235.6 875.5 L239.6 879.5" fill="none" stroke="#000" stroke-width="1.2" stroke-linejoin="round"/>
<path d="M228.3 829.0 L236.0 853.5 L239.6 866.0 L237.5 874.0" fill="none" stroke="#000" stroke-width=".8"/>
<ellipse cx="254.6" cy="813.2" rx="9.6" ry="13" transform="rotate(27 254.6 813.2)" fill="#2030c0" stroke="#000" stroke-width="1"/>
<ellipse cx="255.2" cy="814.4" rx="8.5" ry="12" transform="rotate(27 255.2 814.4)" fill="#fbfbfb"/>
<path d="M236.500 830.500 Q244 827.500 251.300 835.500 L248 851.500 Q246.500 853 245 850.500 Z" fill="#38308c" stroke="#000" stroke-width="1" stroke-linejoin="round"/>
<path d="M238.600 833.200 Q244 832.200 249.600 837.600 L247.300 850.200 Q246.500 851 245.700 849.600 Z" fill="#fbfbfb"/>
<g transform="translate(-99.6 162.3)"><defs><clipPath id="armclip2"><path d="M268.5 460.1 L260.3 475.5 L255.8 490.2 L254.9 508.7 L259.0 526.1 L263.8 540.0 L275.2 571.7 L291.7 605.9 L305.6 614.7 L321.4 622.3 L340.0 629.0 L386.5 643.5 L386.7 638.2 L353.7 608.4 L338.5 588.1 L325.9 565.3 L314.5 540.0 L310.9 531.1 L305.9 513.8 L303.3 499.1 L304.0 488.2 L307.1 479.1 Z"/></clipPath></defs>
<g clip-path="url(#armclip2)"><g filter="url(#cmA)">
<rect x="240" y="440" width="160" height="215" fill="#383838"/>
<path d="M268 545 L300 538 L322 540 L345 590 L390 645 L330 630 L290 610 Z" fill="#282828"/>
<path d="M254 494 L280 509 L277 519 L267 523 L257 525 L254 508 Z" fill="#787878"/>
<path d="M255 494 L284 507" stroke="#a8a8a8" stroke-width="3"/>
<ellipse cx="265" cy="530" rx="8" ry="5" fill="#585858"/>
<ellipse cx="270" cy="541" rx="7" ry="6" fill="#484848"/>
<ellipse cx="280" cy="522" rx="3" ry="4" fill="#484848"/>
<ellipse cx="300" cy="528" rx="7" ry="8" fill="#484848"/>
<ellipse cx="297" cy="520" rx="4" ry="4" fill="#383838"/>
<ellipse cx="305" cy="520" rx="3" ry="8" fill="#282828"/>
<ellipse cx="263" cy="552" rx="3" ry="8" fill="#282828"/>
<ellipse cx="318" cy="566" rx="8" ry="12" fill="#181818"/>
<ellipse cx="328" cy="590" rx="8" ry="10" fill="#181818"/>
<ellipse cx="312" cy="548" rx="5" ry="6" fill="#181818"/>
<ellipse cx="298" cy="552" rx="5" ry="5" fill="#181818"/>
<ellipse cx="300" cy="600" rx="6" ry="6" fill="#383838"/>
<ellipse cx="312" cy="610" rx="8" ry="4" fill="#383838"/>
<ellipse cx="288" cy="592" rx="4" ry="7" fill="#181818"/>
<ellipse cx="296" cy="607" rx="5" ry="4" fill="#181818"/>
<ellipse cx="286" cy="570" rx="4" ry="6" fill="#383838"/>
<ellipse cx="306" cy="580" rx="3" ry="4" fill="#282828"/>
<path d="M322 560 L340 590 L356 610 L349 614 L334 606 L326 590 Z" fill="#080808" />
<path d="M352 612 L386 641 L362 632 L345 622 Z" fill="#282828"/>
<path d="M330 621 L386 643" stroke="#484848" stroke-width="3"/>
</g></g>
<path d="M263.8 540.0 L275.2 571.7 L291.7 605.9 L305.6 614.7 L321.4 622.3 L306.9 606.5 L296.0 596.0 L285.3 578.0 L276.5 546.0 L274.8 539.4 Z" fill="#0a1450" fill-opacity=".38"/>
<path d="M268.5 460.1 L260.3 475.5 L255.8 490.2 L254.9 508.7 L259.0 526.1 L263.8 540.0 L275.2 571.7 L291.7 605.9 L305.6 614.7 L321.4 622.3 L340.0 629.0 L386.5 643.5 L386.7 638.2 L353.7 608.4 L338.5 588.1 L325.9 565.3 L314.5 540.0 L310.9 531.1 L305.9 513.8 L303.3 499.1 L304.0 488.2 L307.1 479.1 Z" fill="none" stroke="#000" stroke-width="1.1" stroke-linejoin="round"/>
<path d="M303.3 498.2 L305.9 513.4 L310.9 531.1 L314.5 540.0 L325.9 565.3 L338.5 588.1 L353.7 608.4 L386.7 638.2 L384.4 639.2 L351.4 609.4 L336.2 589.1 L323.6 566.3 L312.2 541.0 L308.6 532.1 L303.6 514.4 L301.0 499.2 Z" fill="#10405c" stroke="#000" stroke-width=".9"/>
<path d="M273.2 540.0 L274.9 546.6 L283.7 578.6 L294.4 596.6 L305.3 607.1 L317.9 615.3 L336.9 623.9 L384.4 642.9" fill="none" stroke="#70f0f0" stroke-width="1.6"/>
<path d="M274.8 539.4 L276.5 546.0 L285.3 578.0 L296.0 596.0 L306.9 606.5 L319.5 614.7 L338.5 623.3 L386.0 642.3" fill="none" stroke="#000" stroke-width="1.1"/>
<path d="M277.2 538.6 L278.9 545.2 L287.7 577.2 L298.4 595.2 L309.3 605.7 L321.9 613.9" fill="none" stroke="#102050" stroke-width="1.6"/>
<path d="M274.8 539.4 L277.2 538.6" stroke="#000" stroke-width="1"/>
<path d="M270.4 455.7 L308.4 474.4 L307.1 479.1 L268.5 460.1 Z" fill="#202054" stroke="#101030" stroke-width=".8"/>
<ellipse cx="282.20000000000005" cy="519.8" rx="7.3999999999999995" ry="6.8" fill="#0c2468" stroke="#000" stroke-width=".8"/>
<ellipse cx="283.5" cy="518.2" rx="6.5" ry="5.8999999999999995" fill="#fbfbfb"/>
<ellipse cx="292.90000000000003" cy="543.1999999999999" rx="8.6" ry="8" fill="#0c2468" stroke="#000" stroke-width=".8"/>
<ellipse cx="294.2" cy="541.6" rx="7.7" ry="7.1" fill="#fbfbfb"/>
<ellipse cx="303.40000000000003" cy="566.5999999999999" rx="9.6" ry="9" fill="#0c2468" stroke="#000" stroke-width=".8"/>
<ellipse cx="304.7" cy="565.0" rx="8.7" ry="8.1" fill="#fbfbfb"/>
<ellipse cx="313.6" cy="590.6999999999999" rx="10.6" ry="10" fill="#0c2468" stroke="#000" stroke-width=".8"/>
<ellipse cx="314.9" cy="589.1" rx="9.7" ry="9.1" fill="#fbfbfb"/>
<g transform="rotate(28 343.1 614.7)"><ellipse cx="343.1" cy="614.7" rx="16.3" ry="4.6" fill="#1c4488" stroke="#000" stroke-width="1"/><ellipse cx="342.6" cy="615.5" rx="13" ry="2.6" fill="#2c5c8c" stroke="#000" stroke-width=".7"/><ellipse cx="343.6" cy="612.2" rx="8.4" ry="1.9" fill="#fbfbfb"/></g>
<g transform="translate(0 1.8)"><path d="M268.5 458.3 L307.1 477.3 L303.5 487.0 L290.3 510.5 L255.4 494.0 L257.5 484.0 L260.3 474.1 Z" fill="#38308c"/><g clip-path="url(#plateclip)"><g filter="url(#bl2)"><ellipse cx="268" cy="490" rx="9" ry="4" fill="#0818f0"/><ellipse cx="285" cy="501" rx="9" ry="5" fill="#0818f0"/><ellipse cx="294" cy="487" rx="5" ry="8" fill="#0818f0"/><ellipse cx="260" cy="482" rx="4" ry="6" fill="#0818f0"/><ellipse cx="267" cy="490" rx="4" ry="2" fill="#30a0ff"/><ellipse cx="283" cy="499" rx="4" ry="2" fill="#30a0ff"/></g></g><path d="M255.4 494.0 L290.3 510.5 L303.5 487.0" fill="none" stroke="#101030" stroke-width="1"/><ellipse cx="279.3" cy="484.2" rx="6" ry="5.5" fill="#181840" stroke="#000" stroke-width=".6"/>
<ellipse cx="280.4" cy="482.6" rx="4.6" ry="3.9" fill="#fbfbfb"/>
<ellipse cx="274.5" cy="473.5" rx="3.3" ry="2.7" fill="#1c2858" stroke="#101030" stroke-width=".6"/>
<circle cx="276.1" cy="472.3" r=".8" fill="#e8e8f0"/>
<ellipse cx="289.7" cy="481.1" rx="3.3" ry="2.7" fill="#1c2858" stroke="#101030" stroke-width=".6"/>
<circle cx="291.3" cy="479.90000000000003" r=".8" fill="#e8e8f0"/>
<ellipse cx="267.6" cy="487.8" rx="3.3" ry="2.7" fill="#1c2858" stroke="#101030" stroke-width=".6"/>
<circle cx="269.20000000000005" cy="486.6" r=".8" fill="#e8e8f0"/>
<ellipse cx="283.5" cy="495.4" rx="3.3" ry="2.7" fill="#1c2858" stroke="#101030" stroke-width=".6"/>
<circle cx="285.1" cy="494.2" r=".8" fill="#e8e8f0"/></g></g>
<path d="M430.3 568.1 L398.8 620.0 L350.5 700.0 L325.3 740.0 L293.5 799.5 L277.0 820.0 L239.6 878.7 L229.3 897.7 L212.7 931.8" fill="none" stroke="#000" stroke-width="1.1"/>
<path d="M433.3 569.4 L403.3 620.0 L354.5 700.0 L330.4 740.0 L296.4 799.5 L281.5 820.0 L233.7 897.7" fill="none" stroke="#000" stroke-width="1"/>
<g stroke="#000" stroke-width="1" fill="none"><path d="M355.700 707.400L369.700 714.400M351.900 714.400L365.900 720.700M347.500 722.600L362.100 728.900M342 730L374.500 745.600M369.700 714.400L358.300 735.900M377.700 746.500L379.800 741"/></g></g>
<g fill="none">
<path d="M74 871 L94.100 830.600" stroke="#40f000" stroke-width="1.2"/><circle cx="94.100" cy="830.600" r="4" fill="#44f000"/>
<path d="M74 871 L119.200 894.100" stroke="#00ffe8" stroke-width="1.2"/><circle cx="119.200" cy="894.100" r="3.300" fill="#00ffe8"/>
<g stroke="#000" stroke-width="1"><path d="M89.600 842.100 L112.400 853.100 M85.100 852.100 L107 862 M79.900 863.200 L100.900 873"/><path d="M112.400 853.100 L97.300 882.400 M89.600 842.100 L85.100 852.100" stroke-width="1.500"/></g>
<path d="M74.500 870 L85.100 854.100" stroke="#ff0000" stroke-width="1.200"/><circle cx="85.300" cy="853.800" r="1.500" fill="#ff0000"/>
</g>
<text x="103" y="824.500" font-size="8" fill="#40f000">Y</text><text x="92.500" y="851" font-size="7.500" fill="#ff0000">X</text><text x="128.500" y="893.500" font-size="8" fill="#00ffe8">z</text>
</svg><!--/PL-->
<!--PR--><svg class="abs pan" style="left:634px;top:162px" width="624" height="778" viewBox="634 162 624 778">
<g class="vt2"><text x="639.500" y="182">Displacement Mag (WCS)</text><text x="639.500" y="204">(mm)</text><text x="639.500" y="226">Max Disp&#160; 4.7221E+00</text><text x="639.500" y="248">Loadset:P3 :&#160; UNDERRUN-PROTECTIONV2</text><text x="838" y="932.500" style="letter-spacing:0.18px">Displacement Magnitude Fringe</text></g>
<g class="lg" shape-rendering="crispEdges"><rect x="1107" y="183" width="28" height="23" fill="#ff0000"/>
<rect x="1107" y="206" width="28" height="24" fill="#ff6600"/>
<rect x="1107" y="230" width="28" height="24" fill="#ffff00"/>
<rect x="1107" y="254" width="28" height="23" fill="#99ff00"/>
<rect x="1107" y="277" width="28" height="23" fill="#00ff00"/>
<rect x="1107" y="300" width="28" height="24" fill="#70ff78"/>
<rect x="1107" y="324" width="28" height="24" fill="#80ffe0"/>
<rect x="1107" y="348" width="28" height="23" fill="#18a0ff"/>
<rect x="1107" y="371" width="28" height="23" fill="#0000ff"/>
<rect x="1107" y="394" width="28" height="24" fill="#28207c"/>
<rect x="1107.5" y="183.5" width="27" height="235" fill="none" stroke="#000" stroke-width="1"/>
<rect x="1107" y="206" width="29" height="1" fill="#000"/>
<rect x="1107" y="230" width="29" height="1" fill="#000"/>
<rect x="1107" y="254" width="29" height="1" fill="#000"/>
<rect x="1107" y="277" width="29" height="1" fill="#000"/>
<rect x="1107" y="300" width="29" height="1" fill="#000"/>
<rect x="1107" y="324" width="29" height="1" fill="#000"/>
<rect x="1107" y="348" width="29" height="1" fill="#000"/>
<rect x="1107" y="371" width="29" height="1" fill="#000"/>
<rect x="1107" y="394" width="29" height="1" fill="#000"/>
<text x="1147.5" y="186.4">4.72207</text>
<text x="1147.5" y="209.9">4.50000</text>
<text x="1147.5" y="233.4">4.00000</text>
<text x="1147.5" y="256.9">3.50000</text>
<text x="1147.5" y="280.4">3.00000</text>
<text x="1147.5" y="303.9">2.50000</text>
<text x="1147.5" y="327.4">2.00000</text>
<text x="1147.5" y="350.9">1.50000</text>
<text x="1147.5" y="374.4">1.00000</text>
<text x="1147.5" y="397.9">0.50000</text>
<text x="1147.5" y="421.4">0.00000</text></g>
<g shape-rendering="crispEdges">
<path d="M695.5 596.4 L701.9 596.4 L703.4 611.6 L702.4 611.6 Z" fill="#b01818"/>
<path d="M701.4 596.4 L716.6 596.4 L714.2 611.6 L702.9 611.6 Z" fill="#b05818"/>
<path d="M716.1 596.4 L730.9 596.4 L728.5 611.6 L713.7 611.6 Z" fill="#a8a818"/>
<path d="M730.4 596.4 L745.2 596.4 L743.5 611.6 L728.0 611.6 Z" fill="#70a818"/>
<path d="M744.7 596.4 L760.2 596.4 L757.8 611.6 L743.0 611.6 Z" fill="#18a818"/>
<path d="M759.7 596.4 L775.3 596.4 L772.9 611.6 L757.3 611.6 Z" fill="#58a860"/>
<path d="M774.8 596.4 L789.5 596.4 L787.5 611.6 L772.4 611.6 Z" fill="#60a8a0"/>
<path d="M789.0 596.4 L804.6 596.4 L803.0 611.6 L787.0 611.6 Z" fill="#2070a8"/>
<path d="M804.1 596.4 L822.8 596.4 L820.5 611.6 L802.5 611.6 Z" fill="#1818a8"/>
<path d="M822.3 596.4 L837.5 596.4 L840.0 611.6 L820.0 611.6 Z" fill="#282868"/>
<path d="M837.0 596.4 L851.4 596.4 L857.7 611.6 L839.5 611.6 Z" fill="#1818a8"/>
<path d="M850.9 596.4 L863.3 596.4 L868.0 611.6 L857.2 611.6 Z" fill="#2070a8"/>
<path d="M862.8 596.4 L873.6 596.4 L879.9 611.6 L867.5 611.6 Z" fill="#60a8a0"/>
<path d="M873.1 596.4 L883.9 596.4 L894.2 611.6 L879.4 611.6 Z" fill="#58a860"/>
<path d="M883.4 596.4 L904.3 596.4 L913.8 611.6 L893.7 611.6 Z" fill="#18a818"/>
<path d="M903.8 596.4 L976.5 596.4 L976.5 611.6 L913.3 611.6 Z" fill="#70a818"/>
<path d="M976.0 596.4 L992.5 596.4 L997.0 611.6 L976.0 611.6 Z" fill="#18a818"/>
<path d="M992.0 596.4 L1006.3 596.4 L1011.4 611.6 L996.5 611.6 Z" fill="#58a860"/>
<path d="M1005.8 596.4 L1017.5 596.4 L1023.5 611.6 L1010.9 611.6 Z" fill="#60a8a0"/>
<path d="M1017.0 596.4 L1028.6 596.4 L1035.5 611.6 L1023.0 611.6 Z" fill="#2070a8"/>
<path d="M1028.1 596.4 L1045.0 596.4 L1051.8 611.6 L1035.0 611.6 Z" fill="#1818a8"/>
<path d="M1044.5 596.4 L1059.6 596.4 L1069.9 611.6 L1051.3 611.6 Z" fill="#282868"/>
<path d="M1059.1 596.4 L1075.9 596.4 L1087.9 611.6 L1069.4 611.6 Z" fill="#1818a8"/>
<path d="M1075.4 596.4 L1090.5 596.4 L1104.3 611.6 L1087.4 611.6 Z" fill="#2070a8"/>
<path d="M1090.0 596.4 L1104.3 596.4 L1119.7 611.6 L1103.8 611.6 Z" fill="#60a8a0"/>
<path d="M1103.8 596.4 L1119.7 596.4 L1133.5 611.6 L1119.2 611.6 Z" fill="#58a860"/>
<path d="M1119.2 596.4 L1135.2 596.4 L1148.1 611.6 L1133.0 611.6 Z" fill="#18a818"/>
<path d="M1134.7 596.4 L1149.8 596.4 L1162.7 611.6 L1147.6 611.6 Z" fill="#70a818"/>
<path d="M1149.3 596.4 L1164.4 596.4 L1176.5 611.6 L1162.2 611.6 Z" fill="#a8a818"/>
<path d="M1163.9 596.4 L1179.9 596.4 L1188.5 611.6 L1176.0 611.6 Z" fill="#b05818"/>
<path d="M1179.4 596.4 L1184.2 596.4 L1191.1 611.6 L1188.0 611.6 Z" fill="#b01818"/>
<path d="M927.0 598.5 L950.0 598.5 L944.0 603.0 L938.0 602.0 Z" fill="#b0a820"/>
<rect x="695.5" y="596" width="6.4" height="2" fill="#ff0000"/>
<rect x="701.4" y="596" width="15.2" height="2" fill="#ff6600"/>
<rect x="716.1" y="596" width="14.8" height="2" fill="#ffff00"/>
<rect x="730.4" y="596" width="14.8" height="2" fill="#99ff00"/>
<rect x="744.7" y="596" width="15.5" height="2" fill="#00ff00"/>
<rect x="759.7" y="596" width="15.6" height="2" fill="#70ff78"/>
<rect x="774.8" y="596" width="14.7" height="2" fill="#80ffe0"/>
<rect x="789.0" y="596" width="15.6" height="2" fill="#18a0ff"/>
<rect x="804.1" y="596" width="18.7" height="2" fill="#0000ff"/>
<rect x="822.3" y="596" width="15.2" height="2" fill="#28207c"/>
<rect x="837.0" y="596" width="14.4" height="2" fill="#0000ff"/>
<rect x="850.9" y="596" width="12.4" height="2" fill="#18a0ff"/>
<rect x="862.8" y="596" width="10.8" height="2" fill="#80ffe0"/>
<rect x="873.1" y="596" width="10.8" height="2" fill="#70ff78"/>
<rect x="883.4" y="596" width="20.9" height="2" fill="#00ff00"/>
<rect x="903.8" y="596" width="72.7" height="2" fill="#99ff00"/>
<rect x="976.0" y="596" width="16.5" height="2" fill="#00ff00"/>
<rect x="992.0" y="596" width="14.3" height="2" fill="#70ff78"/>
<rect x="1005.8" y="596" width="11.7" height="2" fill="#80ffe0"/>
<rect x="1017.0" y="596" width="11.6" height="2" fill="#18a0ff"/>
<rect x="1028.1" y="596" width="16.9" height="2" fill="#0000ff"/>
<rect x="1044.5" y="596" width="15.1" height="2" fill="#28207c"/>
<rect x="1059.1" y="596" width="16.8" height="2" fill="#0000ff"/>
<rect x="1075.4" y="596" width="15.1" height="2" fill="#18a0ff"/>
<rect x="1090.0" y="596" width="14.3" height="2" fill="#80ffe0"/>
<rect x="1103.8" y="596" width="15.9" height="2" fill="#70ff78"/>
<rect x="1119.2" y="596" width="16.0" height="2" fill="#00ff00"/>
<rect x="1134.7" y="596" width="15.1" height="2" fill="#99ff00"/>
<rect x="1149.3" y="596" width="15.1" height="2" fill="#ffff00"/>
<rect x="1163.9" y="596" width="16.0" height="2" fill="#ff6600"/>
<rect x="1179.4" y="596" width="4.8" height="2" fill="#ff0000"/>
</g>
<path d="M695.5 596.4 L1183.7 596.4 L1190.6 611.6 L702.4 611.6 Z" fill="none" stroke="#000" stroke-width="1.1"/>
<path d="M697 598.6H1185" stroke="#000" stroke-width="1"/>
<path d="M1179.4 597.0 L1183.7 596.4 L1190.6 611.6 L1188.0 611.6 Z" fill="#901010"/>
<defs><clipPath id="memclip"><path d="M854.1 576.6 L870.0 581.5 L889.7 587.7 L900.0 588.6 L915.0 591.7 L928.5 592.3 L953.2 592.8 L976.0 591.4 L1000.0 588.0 L1020.0 583.2 L1048.8 576.3 L1048.8 596.4 L854.1 596.4 Z"/></clipPath></defs>
<g clip-path="url(#memclip)" shape-rendering="crispEdges">
<path d="M845.0 570.0 L860.5 570.0 L868.5 597.0 L850.0 597.0 Z" fill="#1010e0"/>
<path d="M860.0 570.0 L870.5 570.0 L880.5 597.0 L868.0 597.0 Z" fill="#2090e0"/>
<path d="M870.0 570.0 L878.5 570.0 L890.5 597.0 L880.0 597.0 Z" fill="#70dcc8"/>
<path d="M878.0 570.0 L887.5 570.0 L899.5 597.0 L890.0 597.0 Z" fill="#60d868"/>
<path d="M887.0 570.0 L905.5 570.0 L915.5 597.0 L899.0 597.0 Z" fill="#18d018"/>
<path d="M905.0 570.0 L985.5 570.0 L979.5 597.0 L915.0 597.0 Z" fill="#90d818"/>
<path d="M985.0 570.0 L1004.5 570.0 L993.5 597.0 L979.0 597.0 Z" fill="#18d018"/>
<path d="M1004.0 570.0 L1014.5 570.0 L1003.5 597.0 L993.0 597.0 Z" fill="#60d868"/>
<path d="M1014.0 570.0 L1030.5 570.0 L1020.5 597.0 L1003.0 597.0 Z" fill="#70dcc8"/>
<path d="M1030.0 570.0 L1044.5 570.0 L1036.5 597.0 L1020.0 597.0 Z" fill="#2090e0"/>
<path d="M1044.0 570.0 L1060.5 570.0 L1056.5 597.0 L1036.0 597.0 Z" fill="#1010e0"/>
</g>
<path d="M854.1 576.6 L870.0 581.5 L889.7 587.7 L900.0 588.6 L915.0 591.7 L928.5 592.3 L953.2 592.8 L976.0 591.4 L1000.0 588.0 L1020.0 583.2 L1048.8 576.3" fill="none" stroke="#000" stroke-width="1.1"/>
<path d="M849.8 595.8 L851.5 590.4 L870.0 593.0 L889.0 596.0 Z" fill="#fbfbfb" stroke="#000" stroke-width=".9"/>
<path d="M1006.5 596.0 L1025.0 592.8 L1043.2 589.8 L1044.8 595.8 Z" fill="#fbfbfb" stroke="#000" stroke-width=".9"/>
<defs><clipPath id="lfclip"><path d="M767.6 595.8 L780.0 591.0 L791.4 587.0 L813.6 584.8 L837.0 583.0 L837.0 596.4 L767.6 596.4 Z"/></clipPath><clipPath id="rfclip"><path d="M1062.0 583.1 L1085.0 585.0 L1103.8 586.6 L1113.0 591.0 L1122.7 596.4 L1060.0 596.4 Z"/></clipPath></defs>
<g clip-path="url(#lfclip)" shape-rendering="crispEdges">
<path d="M764.0 580.0 L787.5 580.0 L780.5 597.0 L757.0 597.0 Z" fill="#60d868"/>
<path d="M787.0 580.0 L800.5 580.0 L793.5 597.0 L780.0 597.0 Z" fill="#70dcc8"/>
<path d="M800.0 580.0 L816.5 580.0 L809.5 597.0 L793.0 597.0 Z" fill="#2090e0"/>
<path d="M816.0 580.0 L844.5 580.0 L837.5 597.0 L809.0 597.0 Z" fill="#1010e0"/>
</g>
<path d="M767.6 595.8 L780.0 591.0 L791.4 587.0 L813.6 584.8 L837.0 583.0" fill="none" stroke="#000" stroke-width="1.1"/>
<ellipse cx="789.5" cy="593" rx="8.5" ry="2.4" transform="rotate(-8 789.5 593)" fill="#fbfbfb" stroke="#000" stroke-width=".9"/>
<ellipse cx="817" cy="593" rx="14.5" ry="2.7" fill="#fbfbfb" stroke="#000" stroke-width=".9"/>
<g clip-path="url(#rfclip)" shape-rendering="crispEdges">
<path d="M1051.0 580.0 L1078.5 580.0 L1085.5 597.0 L1058.0 597.0 Z" fill="#1010e0"/>
<path d="M1078.0 580.0 L1095.5 580.0 L1102.5 597.0 L1085.0 597.0 Z" fill="#2090e0"/>
<path d="M1095.0 580.0 L1108.5 580.0 L1115.5 597.0 L1102.0 597.0 Z" fill="#70dcc8"/>
<path d="M1108.0 580.0 L1126.5 580.0 L1133.5 597.0 L1115.0 597.0 Z" fill="#60d868"/>
</g>
<path d="M1062.5 583.1 L1085.0 585.0 L1103.8 586.6 L1113.0 591.0 L1122.7 596.2" fill="none" stroke="#000" stroke-width="1.1"/>
<ellipse cx="1075" cy="592.8" rx="14" ry="2.7" fill="#fbfbfb" stroke="#000" stroke-width=".9"/>
<path d="M1096.5 595.6 L1101.5 590.6 L1105.0 591.0 L1111.0 595.6 Z" fill="#fbfbfb" stroke="#000" stroke-width=".9"/>
<path d="M837.4 490.3 L843.8 491.1 L848.5 503.8 L850.9 521.2 L851.7 533.9 L855.6 551.3 L857.2 565.5 L854.1 576.6 L849.5 596.0 L835.5 596.0 L836.6 583.0 L840.6 568.7 L840.2 545.0 L839.8 532.3 L836.6 516.4 L832.7 506.9 Z" fill="#28286c" stroke="#000" stroke-width="1.1" stroke-linejoin="round"/>
<path d="M851.2 530.0 L855.6 551.3 L857.2 565.5 L854.1 576.6 L849.5 595.5 L842.5 595.5 L847.0 572.0 L849.0 550.0 Z" fill="#1010e0"/>
<path d="M852.5 543.0 L856.0 554.0 L856.8 565.5 L853.8 575.0 L850.5 573.0 L851.5 556.0 Z" fill="#28a0f0"/>
<path d="M837.4 490.3 L832.7 506.9 L836.6 516.4 L839.8 532.3 L840.5 548.0 L842.8 548.0 L842.3 532.0 L839.6 516.0 L838.8 507.0 L842.6 491.0 Z" fill="#3a3a92"/><g stroke="#000" stroke-width=".9" fill="none"><path d="M843.5 493 L846 506 L847.3 530 L848 548 L846.500 572 L841.500 595"/><path d="M838.500 507 L841 516 L843 532 L843.600 560 L839.500 584"/><path d="M850.900 527 L846 595"/></g><ellipse cx="845.5" cy="522" rx="1.4" ry="2.8" fill="#38308c" stroke="#000" stroke-width=".8"/><ellipse cx="846" cy="535" rx="1.4" ry="2.8" fill="#2040e0" stroke="#000" stroke-width=".8"/><ellipse cx="846.5" cy="547" rx="1.5" ry="3" fill="#2040e0" stroke="#000" stroke-width=".8"/><ellipse cx="847" cy="561" rx="1.6" ry="3.2" fill="#30a0f0" stroke="#000" stroke-width=".8"/><ellipse cx="843.5" cy="503" rx="1" ry="1.3" fill="#38308c" stroke="#000" stroke-width=".8"/><ellipse cx="842" cy="507" rx="1" ry="1.3" fill="#38308c" stroke="#000" stroke-width=".8"/>
<path d="M837.4 490.3 L843.8 491.1 L848.5 503.8 L850.9 521.2 L851.7 533.9 L855.6 551.3 L857.2 565.5 L854.1 576.6 L849.5 596.0 L835.5 596.0 L836.6 583.0 L840.6 568.7 L840.2 545.0 L839.8 532.3 L836.6 516.4 L832.7 506.9 Z" fill="none" stroke="#000" stroke-width="1.1" stroke-linejoin="round"/>
<path d="M1049.6 490.3 L1055.6 490.3 L1060.8 502.3 L1060.8 519.5 L1062.5 536.7 L1065.9 553.9 L1065.9 569.4 L1062.5 583.1 L1058.5 596.0 L1043.4 596.0 L1048.8 576.3 L1050.5 557.3 L1049.6 545.0 L1048.8 531.6 L1047.0 514.4 L1044.5 506.6 Z" fill="#28286c" stroke="#000" stroke-width="1.1" stroke-linejoin="round"/>
<path d="M1060.8 530.0 L1065.9 553.9 L1065.9 569.4 L1062.5 583.1 L1058.5 595.5 L1051.0 595.5 L1056.0 572.0 L1058.5 550.0 Z" fill="#1010e0"/>
<path d="M1061.5 543.0 L1065.2 554.0 L1065.4 569.0 L1063.0 578.0 L1059.5 575.0 L1060.5 556.0 Z" fill="#28a0f0"/>
<path d="M1049.6 490.3 L1044.5 506.6 L1047.0 514.4 L1048.8 531.6 L1049.8 548.0 L1052.0 548.0 L1051.3 531.0 L1049.8 515.0 L1049.5 507.0 L1052.6 492.0 Z" fill="#3a3a92"/><g stroke="#000" stroke-width=".9" fill="none"><path d="M1052.600 492 L1049.500 507 L1052 516 L1056 503 Z"/><path d="M1055.500 516 L1056.300 540 L1057 560 L1054.500 580 L1050.500 595"/><path d="M1049.500 507 L1051 520 L1052.500 540 L1053 565 L1049 590"/><path d="M1060.800 527 L1054.500 595"/></g><ellipse cx="1052.8" cy="505" rx="1.3" ry="1.6" fill="#38308c" stroke="#000" stroke-width=".8"/><ellipse cx="1055" cy="522" rx="1.4" ry="2.8" fill="#38308c" stroke="#000" stroke-width=".8"/><ellipse cx="1055.5" cy="535" rx="1.4" ry="2.8" fill="#2040e0" stroke="#000" stroke-width=".8"/><ellipse cx="1056" cy="548" rx="1.5" ry="3" fill="#2040e0" stroke="#000" stroke-width=".8"/><ellipse cx="1056.5" cy="562" rx="1.6" ry="3.2" fill="#30a0f0" stroke="#000" stroke-width=".8"/>
<path d="M1049.6 490.3 L1055.6 490.3 L1060.8 502.3 L1060.8 519.5 L1062.5 536.7 L1065.9 553.9 L1065.9 569.4 L1062.5 583.1 L1058.5 596.0 L1043.4 596.0 L1048.8 576.3 L1050.5 557.3 L1049.6 545.0 L1048.8 531.6 L1047.0 514.4 L1044.5 506.6 Z" fill="none" stroke="#000" stroke-width="1.1" stroke-linejoin="round"/>
<g stroke="#1a1a1a" stroke-width="1" fill="none">
<path d="M930.400 580.400 Q934 586 935.600 592.800 L941.800 604.700 L938 619.900 L931.800 607.500 L935.600 592.800"/>
<path d="M954.800 592.600 L960.300 604.700 L956.500 619.600 L950.800 607.500 Z"/>
<path d="M931.800 608.400 H950.800 M941.800 604.500 H978.900 M938 620 H956.500 M938 619.900 L934.700 631.300"/>
<path d="M927.500 573.500 L932 577 L935 572.800 M932 577 L933.800 580"/>
<path d="M931 631.300 H938.500 L932.500 636.800 H940"/>
<path d="M979 598.500 L987.500 604.800 M987 598.800 L980.500 604.500"/>
</g>
<g fill="none">
<g stroke="#1a1a1a" stroke-width="1"><path d="M694.500 856.400 H718.600 L725.100 871.500 L719.400 891.300 H696.200 L688.200 875.500 Z M688.200 875.500 H712.200 L718.600 856.400 M712.200 875.500 L719.400 891.300"/></g>
<path d="M702.700 871.500 L686.900 840.300" stroke="#40f000" stroke-width="1.100"/><circle cx="686.900" cy="840.300" r="4.500" fill="#44f000"/>
<path d="M702.700 871.500 L690.300 910.700" stroke="#00ffe8" stroke-width="1.100"/><circle cx="690.300" cy="910.700" r="4.300" fill="#00ffe8"/><path d="M689 914.500 Q691.500 916 694.500 915.200" stroke="#00ffe8" stroke-width="1"/>
<path d="M702.700 871.500 H748" stroke="#ff0000" stroke-width="1.200"/><circle cx="748.700" cy="871.500" r="3.800" fill="#ff0000"/>
<path d="M686.900 835.800 L688.400 833.800 M690 835.800 L691.800 833.800" stroke="#40f000" stroke-width=".8"/>
</g>
<text x="754" y="873.500" font-size="7.500" fill="#ff0000">X</text>
</svg><!--/PR-->
</body></html>
